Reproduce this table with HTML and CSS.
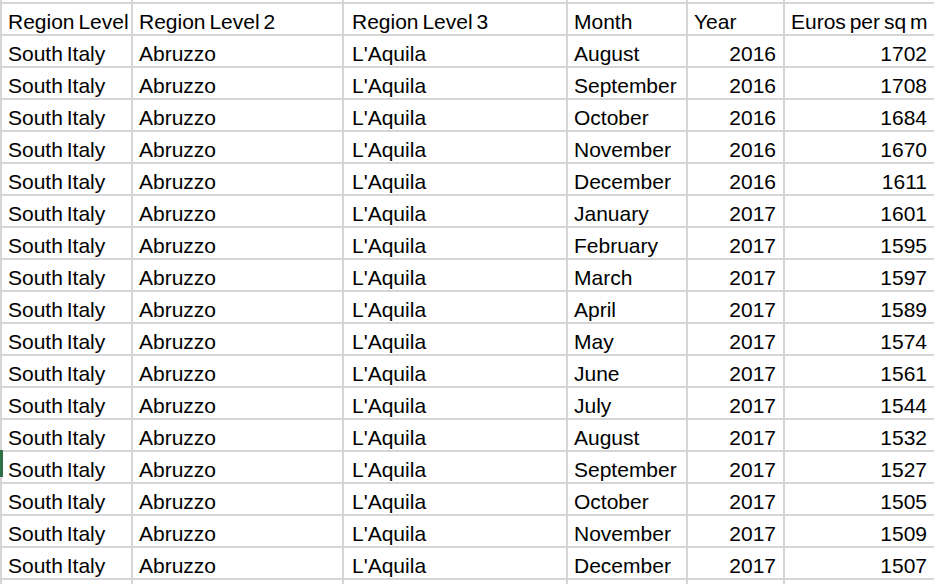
FILE: index.html
```html
<!DOCTYPE html>
<html lang="en">
<head>
<meta charset="utf-8">
<title>Sheet</title>
<link rel="stylesheet" href="styles.css">
</head>
<body>
<div class="sheet">
  <div class="row edge"><div class="c"></div><div class="c"></div><div class="c"></div><div class="c"></div><div class="c"></div><div class="c"></div></div>
  <div class="row"><div class="c">Region Level</div><div class="c">Region Level 2</div><div class="c c3">Region Level 3</div><div class="c">Month</div><div class="c">Year</div><div class="c">Euros per sq m</div></div>
  <div class="row"><div class="c">South Italy</div><div class="c">Abruzzo</div><div class="c c3">L'Aquila</div><div class="c">August</div><div class="c n">2016</div><div class="c n">1702</div></div>
  <div class="row"><div class="c">South Italy</div><div class="c">Abruzzo</div><div class="c c3">L'Aquila</div><div class="c">September</div><div class="c n">2016</div><div class="c n">1708</div></div>
  <div class="row"><div class="c">South Italy</div><div class="c">Abruzzo</div><div class="c c3">L'Aquila</div><div class="c">October</div><div class="c n">2016</div><div class="c n">1684</div></div>
  <div class="row"><div class="c">South Italy</div><div class="c">Abruzzo</div><div class="c c3">L'Aquila</div><div class="c">November</div><div class="c n">2016</div><div class="c n">1670</div></div>
  <div class="row"><div class="c">South Italy</div><div class="c">Abruzzo</div><div class="c c3">L'Aquila</div><div class="c">December</div><div class="c n">2016</div><div class="c n">1611</div></div>
  <div class="row"><div class="c">South Italy</div><div class="c">Abruzzo</div><div class="c c3">L'Aquila</div><div class="c">January</div><div class="c n">2017</div><div class="c n">1601</div></div>
  <div class="row"><div class="c">South Italy</div><div class="c">Abruzzo</div><div class="c c3">L'Aquila</div><div class="c">February</div><div class="c n">2017</div><div class="c n">1595</div></div>
  <div class="row"><div class="c">South Italy</div><div class="c">Abruzzo</div><div class="c c3">L'Aquila</div><div class="c">March</div><div class="c n">2017</div><div class="c n">1597</div></div>
  <div class="row"><div class="c">South Italy</div><div class="c">Abruzzo</div><div class="c c3">L'Aquila</div><div class="c">April</div><div class="c n">2017</div><div class="c n">1589</div></div>
  <div class="row"><div class="c">South Italy</div><div class="c">Abruzzo</div><div class="c c3">L'Aquila</div><div class="c">May</div><div class="c n">2017</div><div class="c n">1574</div></div>
  <div class="row"><div class="c">South Italy</div><div class="c">Abruzzo</div><div class="c c3">L'Aquila</div><div class="c">June</div><div class="c n">2017</div><div class="c n">1561</div></div>
  <div class="row"><div class="c">South Italy</div><div class="c">Abruzzo</div><div class="c c3">L'Aquila</div><div class="c">July</div><div class="c n">2017</div><div class="c n">1544</div></div>
  <div class="row"><div class="c">South Italy</div><div class="c">Abruzzo</div><div class="c c3">L'Aquila</div><div class="c">August</div><div class="c n">2017</div><div class="c n">1532</div></div>
  <div class="row"><div class="c active">South Italy</div><div class="c">Abruzzo</div><div class="c c3">L'Aquila</div><div class="c">September</div><div class="c n">2017</div><div class="c n">1527</div></div>
  <div class="row"><div class="c">South Italy</div><div class="c">Abruzzo</div><div class="c c3">L'Aquila</div><div class="c">October</div><div class="c n">2017</div><div class="c n">1505</div></div>
  <div class="row"><div class="c">South Italy</div><div class="c">Abruzzo</div><div class="c c3">L'Aquila</div><div class="c">November</div><div class="c n">2017</div><div class="c n">1509</div></div>
  <div class="row"><div class="c">South Italy</div><div class="c">Abruzzo</div><div class="c c3">L'Aquila</div><div class="c">December</div><div class="c n">2017</div><div class="c n">1507</div></div>
  <div class="row"><div class="c"></div><div class="c"></div><div class="c"></div><div class="c"></div><div class="c"></div><div class="c"></div></div>
</div>
</body>
</html>
```
FILE: styles.css
```css
html, body {
  margin: 0;
  padding: 0;
  background: #ffffff;
  width: 934px;
  height: 584px;
  overflow: hidden;
}

.sheet {
  display: grid;
  grid-template-columns: 129px 209px 222px 118px 95px 149px;
  grid-template-rows: 2px;
  grid-auto-rows: 30px;
  gap: 2px;
  padding-left: 2px;
  background: #d5d5d5;
  width: max-content;
  font-family: "Liberation Sans", Arial, sans-serif;
  font-size: 21px;
  word-spacing: -2px;
  color: #000000;
}

.row {
  display: contents;
}

.edge .c {
  height: 2px;
  padding: 0;
}

.c {
  background: #ffffff;
  padding: 5px 6px 0 6px;
  line-height: 25px;
  white-space: nowrap;
  overflow: hidden;
  position: relative;
}

.c3 {
  padding-left: 8px;
}

.n {
  text-align: right;
  padding-right: 7px;
}

.active {
  overflow: visible;
}

.active::before {
  content: "";
  position: absolute;
  left: -2px;
  top: -2px;
  width: 3px;
  height: 27px;
  background: #2e7046;
}
```
